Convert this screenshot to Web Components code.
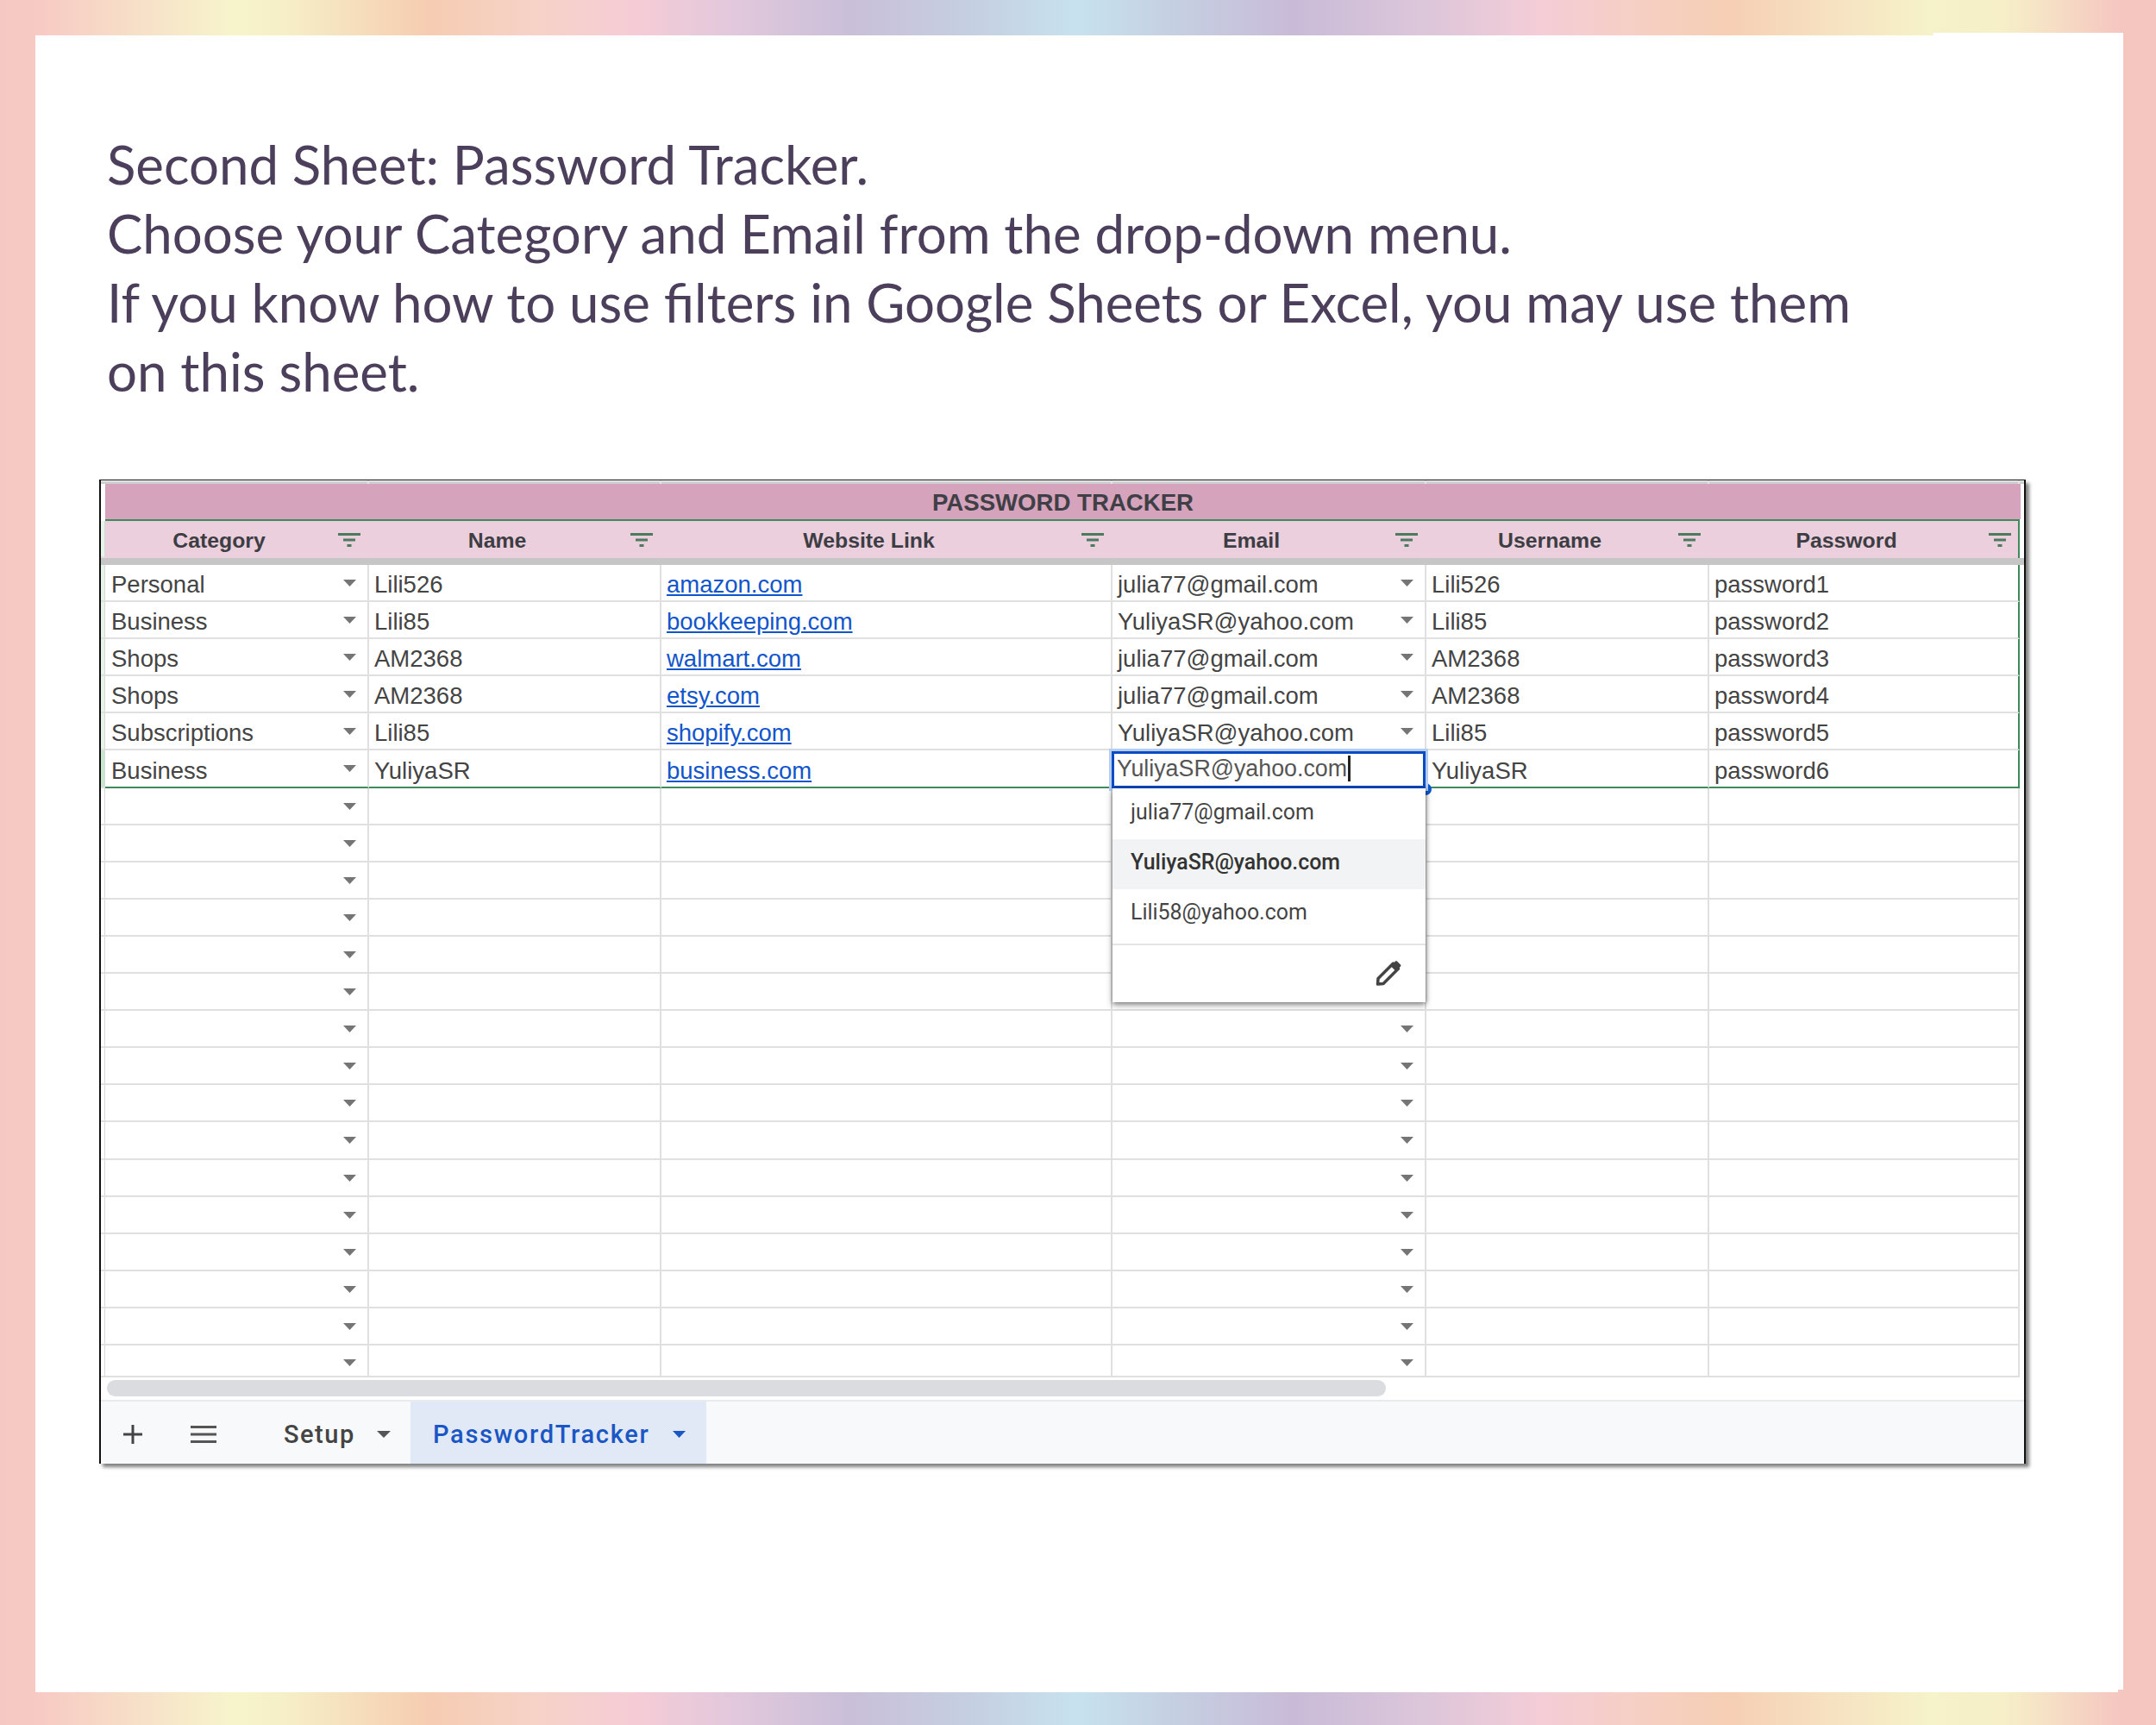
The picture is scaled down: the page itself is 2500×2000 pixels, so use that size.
<!DOCTYPE html>
<html lang="en">
<head>
<meta charset="utf-8">
<title>Password Tracker</title>
<style>
  html, body { margin: 0; padding: 0; }
  body { width: 2500px; height: 2000px; overflow: hidden; font-family: "Liberation Sans", Arial, sans-serif; }
</style>
</head>
<body>
<pastel-page>
  <tracker-intro>Second Sheet: Password Tracker.<br>Choose your Category and Email from the drop-down menu.<br>If you know how to use filters in Google Sheets or Excel, you may use them on this sheet.</tracker-intro>
  <sheet-frame>
    <sheet-grid></sheet-grid>
    <email-dropdown slot="overlay" value="YuliyaSR@yahoo.com"></email-dropdown>
    <sheet-tabs slot="tabs"></sheet-tabs>
  </sheet-frame>
</pastel-page>

<script>
// page background with the pastel stripes and the white sheet on top
class PastelPage extends HTMLElement {
  constructor() {
    super();
    this.attachShadow({ mode: 'open' }).innerHTML = `
      <style>
        :host { display: block; width: 2500px; height: 2000px; box-sizing: border-box; padding: 41px 38px 38px 41px;
          background: linear-gradient(90deg, #f6c8c3 0, #f7c9c3 1.5%, #f7f4cc 10.8%, #f6f0c8 13%, #f6cdb2 19.8%, #f6d2c8 25%, #f5ccd6 29.5%, #e2c8dc 34%, #c9bfd9 39.5%, #c5cfe2 45%, #c7e2ef 50%, #c5cfe2 54.5%, #c9bbd8 60%, #dcc6da 66%, #f4cdd7 71.5%, #f6cfc4 76%, #f6cfb4 80.3%, #f6e0c0 84.5%, #f6f2c9 89.5%, #f6efc8 93%, #f5c5c0 98.5%); }
        .sheet { position: relative; height: 100%; background: #fff; }
        .notch { position: absolute; right: 0; top: -3px; width: 220px; height: 3px; background: #fff; }
        .corner { position: absolute; right: 0; bottom: 0; width: 6px; height: 3px; background: #f5c5c0; }
      </style>
      <div class="sheet"><div class="notch"></div><div class="corner"></div><slot></slot></div>`;
  }
}

class TrackerIntro extends HTMLElement {
  constructor() {
    super();
    this.attachShadow({ mode: 'open' }).innerHTML = `
      <style>
        :host { display: block; box-sizing: border-box; width: 2170px; padding: 109px 0 86px 83px;
          font-family: Lato, "Open Sans", sans-serif; font-size: 61.8px; line-height: 80px; color: #4b3f5c; }
      </style>
      <slot></slot>`;
  }
}

class SheetFrame extends HTMLElement {
  constructor() {
    super();
    this.attachShadow({ mode: 'open' }).innerHTML = `
      <style>
        :host { display: block; position: relative; box-sizing: border-box; width: 2234px; height: 1141px; margin-left: 74px;
          border: solid #111; border-width: 1px 2px 2px 2px; box-shadow: 4px 4px 4px #808080; background: #fff; }
      </style>
      <slot></slot><slot name="overlay"></slot><slot name="tabs"></slot>`;
  }
}

class FilterIcon extends HTMLElement {
  constructor() {
    super();
    this.attachShadow({ mode: 'open' }).innerHTML = `
      <style>:host { display: block; width: 26px; height: 16px; } svg { display: block; }</style>
      <svg width="26" height="16" viewBox="0 0 26 16" fill="#4c7a5e">
        <rect x="0" y="0" width="26" height="3"/><rect x="6" y="6.5" width="14" height="3"/><rect x="10.5" y="13" width="5" height="3"/>
      </svg>`;
  }
}

class DropArrow extends HTMLElement {
  constructor() {
    super();
    this.attachShadow({ mode: 'open' }).innerHTML = `
      <style>:host { display: block; width: 15px; height: 8px; } svg { display: block; }</style>
      <svg width="15" height="8" viewBox="0 0 15 8"><path d="M0 0h15L7.5 8z" fill="#757575"/></svg>`;
  }
}

const HEADERS = ['Category', 'Name', 'Website Link', 'Email', 'Username', 'Password'];
const ROWS = [
  ['Personal', 'Lili526', 'amazon.com', 'julia77@gmail.com', 'Lili526', 'password1'],
  ['Business', 'Lili85', 'bookkeeping.com', 'YuliyaSR@yahoo.com', 'Lili85', 'password2'],
  ['Shops', 'AM2368', 'walmart.com', 'julia77@gmail.com', 'AM2368', 'password3'],
  ['Shops', 'AM2368', 'etsy.com', 'julia77@gmail.com', 'AM2368', 'password4'],
  ['Subscriptions', 'Lili85', 'shopify.com', 'YuliyaSR@yahoo.com', 'Lili85', 'password5'],
  ['Business', 'YuliyaSR', 'business.com', '', 'YuliyaSR', 'password6']
];
const EMPTY_ROWS = 16;

class SheetGrid extends HTMLElement {
  connectedCallback() {
    if (this.shadowRoot) return;
    const head = HEADERS.map(h => `<div class="hcell"><span>${h}</span><filter-icon></filter-icon></div>`).join('');
    const ticks = HEADERS.map(() => '<div></div>').join('');

    const filled = ROWS.map((r, i) => `
      <div class="row filled ${i === ROWS.length - 1 ? 'last' : ''}">
        <div class="stub"></div>
        <div class="cell"><span>${r[0]}</span><drop-arrow></drop-arrow></div>
        <div class="cell"><span>${r[1]}</span></div>
        <div class="cell"><a>${r[2]}</a></div>
        <div class="cell"><span>${r[3]}</span>${r[3] ? '<drop-arrow></drop-arrow>' : ''}</div>
        <div class="cell"><span>${r[4]}</span></div>
        <div class="cell"><span>${r[5]}</span></div>
      </div>`).join('');

    let blank = '';
    for (let i = 0; i < EMPTY_ROWS; i++) {
      blank += `
        <div class="row ${i === EMPTY_ROWS - 1 ? 'short' : ''}">
          <div class="stub"></div>
          <div class="cell"><span></span><drop-arrow></drop-arrow></div>
          <div class="cell"></div><div class="cell"></div>
          <div class="cell"><span></span><drop-arrow></drop-arrow></div>
          <div class="cell"></div><div class="cell"></div>
        </div>`;
    }

    this.attachShadow({ mode: 'open' }).innerHTML = `
      <style>
        :host { display: block; font-family: "Liberation Sans", Arial, sans-serif; color: #444; --cols: 5px 306px 339px 523px 364px 328px 360px 5px; }
        .ticks { display: grid; grid-template-columns: 311px 339px 523px 364px 328px 360px; height: 4px; background: linear-gradient(#fff 0 1px, #cfcfcf 1px); }
        .ticks div { border-right: 2px solid #e4e4e4; }
        .title { margin: 0 4px 0 5px; height: 41px; background: #d5a3bc; display: flex; align-items: center; justify-content: center;
          font-size: 27.6px; font-weight: 700; color: #3f3f46; padding-top: 2px; box-sizing: border-box; }
        .green { height: 2px; margin: 0 5px; background: #3e8a5c; }
        .hrow { display: grid; grid-template-columns: var(--cols); height: 43px; }
        .hrow .stub { background: #e6f4ea; }
        .hcell { background: #ebcfdd; display: flex; align-items: center; box-sizing: border-box; padding-top: 3px; font-size: 24.8px; font-weight: 700; color: #3d3d44; }
        .hcell span { flex: 1; text-align: center; }
        .hcell filter-icon { margin: -3px 10px 0 6px; }
        .hcell:nth-child(7) { box-shadow: inset -2px 0 #3e8a5c; }
        .freeze { height: 8px; background: #c6c6c6; }
        .row { display: grid; grid-template-columns: var(--cols); height: 43.1px; box-sizing: border-box; }
        .row.short { height: 37px; }
        .stub { border-right: 1px solid #d8d8d8; box-sizing: border-box; border-bottom: 2px solid #e0e0e0; }
        .filled .stub { background: #e6f4ea; }
        .filled.last .stub { background: #c6e6cf; }
        .cell { display: flex; align-items: center; box-sizing: border-box; padding: 5px 13px 0 6px; font-size: 27.5px; white-space: nowrap;
          border-right: 2px solid #e0e0e0; border-bottom: 2px solid #e0e0e0; }
        .stub + .cell { padding-left: 7px; }
        .cell span { flex: 1; }
        .cell drop-arrow { align-self: flex-start; margin-top: 12px; }
        .short .cell drop-arrow { margin-top: 11px; }
        .cell a { color: #1155cc; text-decoration: underline; }
        .filled .cell:nth-child(7) { border-right-color: #3e8a5c; }
        .filled.last .cell { border-bottom-color: #3e8a5c; }
        .track { height: 25px; box-sizing: border-box; padding: 3px 0 3px 7px; }
        .thumb { width: 1483px; height: 19px; border-radius: 10px; background: #dadce0; }
      </style>
      <div class="ticks">${ticks}</div>
      <div class="title">PASSWORD TRACKER</div>
      <div class="green"></div>
      <div class="hrow"><div class="stub"></div>${head}</div>
      <div class="freeze"></div>
      ${filled}${blank}
      <div class="track"><div class="thumb"></div></div>`;
  }
}

// cell editor with the validation list open under it
class EmailDropdown extends HTMLElement {
  connectedCallback() {
    if (this.shadowRoot) return;
    const value = this.getAttribute('value');
    this.attachShadow({ mode: 'open' }).innerHTML = `
      <style>
        :host { display: block; position: absolute; left: 1172px; top: 314px; width: 366px; font-family: Roboto, "Liberation Sans", sans-serif; }
        .handle { position: absolute; left: 357px; top: 37px; width: 14px; height: 14px; border-radius: 50%; background: #0b57d0; }
        .editor { position: relative; box-sizing: border-box; width: 364px; height: 43px; border: 3px solid #0b4cc4; box-shadow: 0 0 0 3px #b4cdf1;
          background: #fff; padding: 0 0 3px 3px; display: flex; align-items: center; font-family: "Liberation Sans", Arial, sans-serif; font-size: 26.8px; color: #555; }
        .caret { width: 3px; height: 30px; background: #222; margin-left: 1px; }
        .menu { position: absolute; left: 1px; top: 43px; box-sizing: border-box; width: 363px; height: 248px; background: #fff; padding-top: 1px;
          box-shadow: 0 3px 7px rgba(0,0,0,.45), 1px 0 4px rgba(0,0,0,.25); }
        .item { height: 58px; box-sizing: border-box; padding: 0 0 6px 21px; display: flex; align-items: center; font-size: 24.9px; color: #444; }
        .item.on { background: #f1f3f4; font-weight: 500; color: #333; }
        .foot { margin-top: 5px; border-top: 2px solid #e4e4e4; display: flex; justify-content: flex-end; padding: 16px 27px 0 0; }
        svg { display: block; }
      </style>
      <div class="handle"></div>
      <div class="editor"><span>${value}</span><span class="caret"></span></div>
      <div class="menu">
        <div class="item">julia77@gmail.com</div>
        <div class="item on">YuliyaSR@yahoo.com</div>
        <div class="item">Lili58@yahoo.com</div>
        <div class="foot">
          <svg width="32" height="32" viewBox="0 0 32 32">
            <path d="M4 22.500 21.500 5l6 6L10 28.500 3.500 29z" fill="#fff" stroke="#444" stroke-width="3.500" stroke-linejoin="round"/>
            <path d="M18.500 8 24 2.500a1.500 1.500 0 0 1 2 0l4 4a1.500 1.500 0 0 1 0 2L24.500 14z" fill="#444"/>
          </svg>
        </div>
      </div>`;
  }
}

class SheetTabs extends HTMLElement {
  constructor() {
    super();
    this.attachShadow({ mode: 'open' }).innerHTML = `
      <style>
        :host { display: flex; align-items: stretch; box-sizing: border-box; height: 74px; margin-top: 1px; background: #f8f9fa; border-top: 2px solid #e8eaed;
          font-family: Roboto, "Liberation Sans", sans-serif; font-size: 29px; font-weight: 500; letter-spacing: 1.5px; color: #444; }
        .icons { display: flex; align-items: center; padding: 4px 0 0 26px; gap: 56px; width: 212px; box-sizing: border-box; }
        svg { display: block; }
        .tab { display: flex; align-items: center; padding-top: 5px; box-sizing: border-box; }
        .tab.setup { width: 147px; }
        .tab.active { width: 343px; padding-left: 26px; background: #e1e9f7; color: #1a56c4; letter-spacing: 1.7px; }
        .tab span { width: 108px; }
        .tab.active span { width: 278px; }
      </style>
      <div class="icons">
        <svg width="22" height="22" viewBox="0 0 22 22"><path d="M11 0v22M0 11h22" stroke="#444" stroke-width="3"/></svg>
        <svg width="30" height="20" viewBox="0 0 30 20" fill="#555"><rect width="30" height="3"/><rect y="8.500" width="30" height="3"/><rect y="17" width="30" height="3"/></svg>
      </div>
      <div class="tab setup"><span>Setup</span><svg width="16" height="8" viewBox="0 0 16 8"><path d="M0 0h16L8 8z" fill="#555"/></svg></div>
      <div class="tab active"><span>PasswordTracker</span><svg width="15" height="8" viewBox="0 0 15 8"><path d="M0 0h15L7.500 8z" fill="#1a56c4"/></svg></div>`;
  }
}

customElements.define('pastel-page', PastelPage);
customElements.define('tracker-intro', TrackerIntro);
customElements.define('sheet-frame', SheetFrame);
customElements.define('filter-icon', FilterIcon);
customElements.define('drop-arrow', DropArrow);
customElements.define('sheet-grid', SheetGrid);
customElements.define('email-dropdown', EmailDropdown);
customElements.define('sheet-tabs', SheetTabs);
</script>
</body>
</html>
